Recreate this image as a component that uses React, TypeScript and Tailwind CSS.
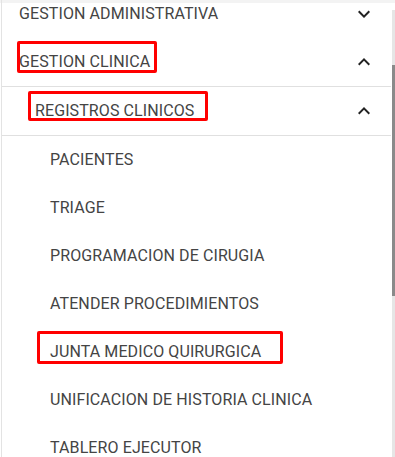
import React from "react";

const ChevronDown = () => (
  <svg width="24" height="24" viewBox="0 0 24 24" className="shrink-0">
    <path d="M16.59 8.59L12 13.17 7.41 8.59 6 10l6 6 6-6z" fill="#222" />
  </svg>
);
const ChevronUp = () => (
  <svg width="24" height="24" viewBox="0 0 24 24" className="shrink-0">
    <path d="M12 8l-6 6 1.41 1.41L12 10.83l4.59 4.58L18 14z" fill="#222" />
  </svg>
);

const items = [
  "PACIENTES",
  "TRIAGE",
  "PROGRAMACION DE CIRUGIA",
  "ATENDER PROCEDIMIENTOS",
  "JUNTA MEDICO QUIRURGICA",
  "UNIFICACION DE HISTORIA CLINICA",
  "TABLERO EJECUTOR",
];

export default function App() {
  return (
    <div className="relative w-[395px] h-[457px] overflow-hidden bg-white font-['Roboto',sans-serif] text-[16px] tracking-[0.1px] text-[#444444]">
      <div className="absolute top-0 left-0 right-0 h-[3px] bg-[#f3f3f3] z-10" />
      <div className="absolute left-[1px] top-0 bottom-0 w-[1px] bg-[#e3e3e3] z-10" />
      <div className="absolute right-0 top-[10px] bottom-0 w-[3px] bg-[#e6e6e6]">
        <div className="absolute left-0 right-0 top-[55px] h-[231px] bg-[#8a8a8a]" />
      </div>
      <div className="flex flex-col w-[391px] mt-[-10px]">
        <div className="h-[48px] flex items-center justify-between pl-[19px] pr-[15px]">
          <span>GESTION ADMINISTRATIVA</span>
          <ChevronDown />
        </div>
        <div className="h-[48px] flex items-center justify-between pl-[19px] pr-[15px]">
          <span className="relative">
            GESTION CLINICA
            <span className="absolute left-[-2px] top-[-9px] w-[140px] h-[32px] border-[3px] border-[#ff0000] rounded-[2px]" />
          </span>
          <ChevronUp />
        </div>
        <div className="h-[1px] ml-[2px] bg-[#e0e0e0]" />
        <div className="h-[48px] flex items-center justify-between pl-[35px] pr-[15px]">
          <span className="relative">
            REGISTROS CLINICOS
            <span className="absolute left-[-7px] top-[-8px] w-[180px] h-[30px] border-[3px] border-[#ff0000] rounded-[2px]" />
          </span>
          <ChevronUp />
        </div>
        <div className="h-[1px] ml-[2px] bg-[#e0e0e0]" />
        {items.map((it) => (
          <div key={it} className="h-[48px] flex items-center pl-[50px] pr-[15px]">
            {it === "JUNTA MEDICO QUIRURGICA" ? (
              <span className="relative">
                {it}
                <span className="absolute left-[-13px] top-[-9px] w-[246px] h-[33px] border-[3px] border-[#ff0000] rounded-[2px]" />
              </span>
            ) : (
              <span>{it}</span>
            )}
          </div>
        ))}
      </div>
    </div>
  );
}
